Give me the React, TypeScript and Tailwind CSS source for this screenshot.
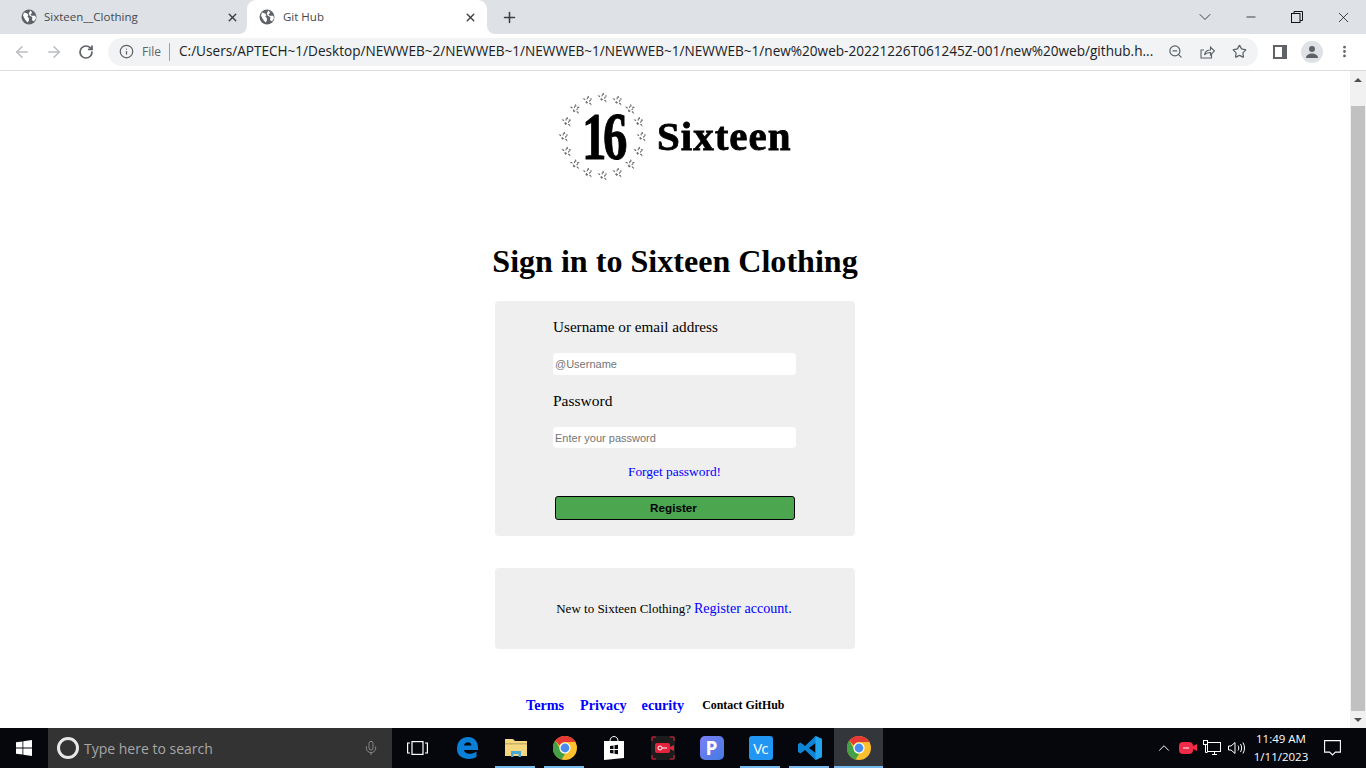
import React from 'react';
import { ArrowLeft, ArrowRight, RotateCw, Info, ChevronDown, ChevronUp, X, Plus, Minus, ZoomOut, Star, MoreVertical, Mic } from 'lucide-react';

const Globe = () => (
  <svg width="16" height="16" viewBox="0 0 16 16">
    <circle cx="8" cy="8" r="7.5" fill="#5f6368" />
    <path d="M3 3.5l3.2 1 1.2 1.6-1 1.4 1.5 1.5v2.6l-1.3 1.8L4 10.5 2 6.5zM10 1.8l1 2.2-1.5 1.4 1 1.4h3.8l.7 2.5-2 3-2-1 .3-3.3-2.6-1.2-.9-2.6 1.3-2.2z" fill="#fff" />
  </svg>
);

const Chrome = () => (
  <svg width="24" height="24" viewBox="0 0 24 24">
    <circle cx="12" cy="12" r="12" fill="#fbc02d" />
    <path d="M12 0a12 12 0 0 1 10.4 6H12a6 6 0 0 0-5.4 3.4L2.3 4.4A12 12 0 0 1 12 0z" fill="#e53935" />
    <path d="M2.3 4.4l4.4 7.9A6 6 0 0 0 12 18l-3.4 5.5A12 12 0 0 1 2.3 4.4z" fill="#43a047" />
    <circle cx="12" cy="12" r="5.6" fill="#fff" />
    <circle cx="12" cy="12" r="4.4" fill="#4a8bf0" />
  </svg>
);

const StarRing = () => {
  const stars = [];
  for (let i = 0; i < 16; i++) {
    const a = (i / 16) * Math.PI * 2;
    stars.push(
      <polygon
        key={i}
        points="0,-4 1,-1 4,-1 1.5,1 2.5,4 0,2 -2.5,4 -1.5,1 -4,-1 -1,-1"
        transform={`translate(${45 + Math.sin(a) * 39} ${45 - Math.cos(a) * 39})`}
        fill="#fff"
        stroke="#666"
        strokeWidth="1.1"
        strokeDasharray="2 2"
      />
    );
  }
  return <svg width="90" height="90" viewBox="0 0 90 90">{stars}</svg>;
};

const TaskIcon = ({ children, active, bar }: { children: React.ReactNode; active?: boolean; bar?: boolean }) => (
  <div className={`relative flex h-10 w-[49px] items-center justify-center ${active ? 'bg-[#33363b]' : ''}`}>
    {children}
    {bar && <div className={`absolute bottom-0 h-[2px] bg-[#76b9ed] ${active ? 'left-0 right-0' : 'left-[4px] right-[5px]'}`} />}
  </div>
);

const BrowserChrome = () => (
  <div className="shrink-0" style={{ fontFamily: '"Open Sans", "Noto Sans", sans-serif' }}>
    <div className="flex h-[34px] items-end justify-between bg-[#dee1e6]">
      <div className="flex items-end">
        <div className="flex h-[34px] w-[247px] items-center pl-[21px] pr-[8px] text-[11.5px] text-[#45494d]">
          <Globe />
          <span className="ml-[7px] flex-1">Sixteen__Clothing</span>
          <X size={13} strokeWidth={2.5} className="text-[#3c4043]" />
        </div>
        <div className="relative flex h-[34px] w-[240px] items-center rounded-t-[9px] bg-white pl-[12px] pr-[10px] text-[11.5px] text-[#45494d]">
          <div className="absolute bottom-0 left-[-8px] h-[8px] w-[8px] bg-white">
            <div className="h-full w-full rounded-br-[8px] bg-[#dee1e6]" />
          </div>
          <Globe />
          <span className="ml-[8px] flex-1">Git Hub</span>
          <X size={13} strokeWidth={2.5} className="text-[#3c4043]" />
          <div className="absolute bottom-0 right-[-8px] h-[8px] w-[8px] bg-white">
            <div className="h-full w-full rounded-bl-[8px] bg-[#dee1e6]" />
          </div>
        </div>
        <div className="flex h-[34px] w-[44px] items-center justify-center">
          <Plus size={17} strokeWidth={2.2} className="text-[#3c4043]" />
        </div>
      </div>
      <div className="flex h-[34px] items-center">
        <div className="flex w-[46px] justify-center"><ChevronDown size={20} strokeWidth={1} className="text-[#222]" /></div>
        <div className="flex w-[46px] justify-center"><Minus size={14} strokeWidth={1.2} className="text-black" /></div>
        <div className="flex w-[46px] justify-center">
          <svg width="12" height="12" viewBox="0 0 12 12" fill="none" stroke="#111"><rect x=".5" y="2.5" width="8.5" height="9" /><path d="M3 2.5V.5h8.500v9H9" /></svg>
        </div>
        <div className="flex w-[46px] justify-center"><X size={17} strokeWidth={1} className="text-black" /></div>
      </div>
    </div>
    <div className="flex h-[37px] items-center border-b border-[#dadce0] bg-white pb-[1px]">
      <div className="flex w-[108px] items-center pl-[13px]">
        <ArrowLeft size={18} strokeWidth={2} className="text-[#b9bcc0]" />
        <ArrowRight size={18} strokeWidth={2} className="ml-[14px] text-[#b9bcc0]" />
        <RotateCw size={16} strokeWidth={2.6} className="ml-[15px] text-[#5f6368]" />
      </div>
      <div className="flex h-[28px] w-[1150px] items-center rounded-full bg-[#f1f3f4] pl-[11px] pr-[10px]">
        <Info size={15} strokeWidth={2} className="text-[#5f6368]" />
        <span className="ml-[8px] text-[12px] text-[#5f6368]">File</span>
        <div className="ml-[8px] h-[18px] w-px bg-[#9aa0a6]" />
        <span className="ml-[9px] w-[979px] overflow-hidden whitespace-nowrap text-[13.6px] text-[#202124]">C:/Users/APTECH~1/Desktop/NEWWEB~2/NEWWEB~1/NEWWEB~1/NEWWEB~1/NEWWEB~1/new%20web-20221226T061245Z-001/new%20web/github.h...</span>
        <ZoomOut size={15} strokeWidth={2} className="ml-[10px] text-[#5f6368]" />
        <svg width="16" height="16" viewBox="0 0 16 16" fill="none" stroke="#5f6368" strokeWidth="1.100" className="ml-[16px]">
          <path d="M12.500 10v4H2V6h3" /><path d="M5.500 11c.5-3.500 3-5 6-5V3l4 4-4 4V8.500c-2.500 0-4.500.5-6 2.500z" />
        </svg>
        <Star size={15} strokeWidth={2} className="ml-[17px] text-[#5f6368]" />
      </div>
      <div className="flex flex-1 items-center pl-[15px]">
        <svg width="14" height="14" viewBox="0 0 14 14"><rect width="14" height="14" fill="#5f6368" /><rect x="2" y="2" width="7" height="10" fill="#fff" /></svg>
        <div className="ml-[14px] flex h-[22px] w-[22px] items-center justify-center rounded-full bg-[#dee1e6]">
          <svg width="14" height="14" viewBox="0 0 14 14" fill="#5f6368"><circle cx="7" cy="4" r="3" /><path d="M1 13c0-3 3-4.500 6-4.500s6 1.500 6 4.500z" /></svg>
        </div>
        <MoreVertical size={15} strokeWidth={2.5} className="ml-[14px] text-[#5f6368]" />
      </div>
    </div>
  </div>
);

const Taskbar = () => (
  <div className="flex h-10 shrink-0 items-center bg-[#05070c] text-white" style={{ fontFamily: '"Open Sans", "Noto Sans", sans-serif' }}>
    <div className="flex h-10 w-[48px] items-center justify-center">
      <svg width="16" height="16" viewBox="0 0 16 16" fill="#fff"><path d="M0 2.300l6.500-.9v6.200H0zM7.300 1.300L16 0v7.600H7.300zM0 8.400h6.500v6.200L0 13.700zM7.300 8.400H16V16l-8.700-1.300z" /></svg>
    </div>
    <div className="flex h-10 w-[344px] items-center bg-[#333] pl-[9px] pr-[13px]">
      <div className="h-[22px] w-[22px] rounded-full border-[3px] border-[#e8e8e8]" />
      <span className="ml-[5px] flex-1 text-[14px] text-[#a6a6a6]">Type here to search</span>
      <Mic size={16} strokeWidth={1.200} className="text-[#9a9a9a]" />
    </div>
    <div className="flex h-10 w-[50px] items-center justify-center">
      <svg width="21" height="14" viewBox="0 0 21 14" fill="none" stroke="#fff" strokeWidth="1.200"><rect x="5" y=".6" width="11" height="12.800" /><path d="M3 2H.6v10H3M18 2h2.400v10H18" /></svg>
    </div>
    <TaskIcon>
      <svg width="22" height="24" viewBox="0 0 22 24"><path d="M1 13C1 5 6 1 12 1c6 0 10 4 10 11v2H8c.5 4.500 7.500 5 12.500 1.500v5.500c-7 4-19.500 2-19.500-8zM8 9.500h7.500C15.500 5 8.500 5 8 9.500z" fill="#0a7fd8" /></svg>
    </TaskIcon>
    <TaskIcon bar>
      <svg width="22" height="20" viewBox="0 0 22 20"><path d="M0 1h8l2 2h12v15H0z" fill="#f5d77e" /><rect y="5" width="22" height="1.500" fill="#c9b26a" /><path d="M6 13h10v6h-2.500v-3h-5v3H6z" fill="#4aa8d8" /></svg>
    </TaskIcon>
    <TaskIcon bar><Chrome /></TaskIcon>
    <TaskIcon>
      <svg width="22" height="24" viewBox="0 0 22 24" fill="#fff"><path d="M7 5c0-6 8-6 8 0" fill="none" stroke="#fff" /><path d="M1 5h20v17L1 24z" /><path d="M7 10l3.500-.5v3.500H7zM11.500 9.300l3.500-.5V13h-3.500zM7 14h3.500v3.500L7 17zM11.500 14H15v4.200l-3.500-.5z" fill="#05070c" /></svg>
    </TaskIcon>
    <TaskIcon>
      <svg width="24" height="24" viewBox="0 0 24 24"><rect width="24" height="24" rx="3" fill="#1c1c1c" /><path d="M1 5V1h4M19 1h4v4M23 19v4h-4M5 23H1v-4" fill="none" stroke="#e5233d" /><rect x="4" y="7" width="15" height="10" rx="2" fill="#e5233d" /><path d="M19 11l4-2v6l-4-2z" fill="#e5233d" /><circle cx="9" cy="12" r="2" fill="none" stroke="#fff" /><path d="M11 12h5" stroke="#fff" /></svg>
    </TaskIcon>
    <TaskIcon>
      <div className="flex h-6 w-6 items-center justify-center rounded-[5px] bg-gradient-to-br from-[#7b7ff5] to-[#3f7be0] text-[19px] font-bold leading-none text-white">P</div>
    </TaskIcon>
    <TaskIcon bar>
      <div className="flex h-6 w-6 items-center justify-center rounded-[3px] bg-[#2196f3] text-[15px] leading-none tracking-tighter text-white">Vc</div>
    </TaskIcon>
    <TaskIcon bar>
      <svg width="24" height="24" viewBox="0 0 24 24"><path d="M17.500 0L24 3v18l-6.500 3L7 14l-4.500 3.500L0 16v-8l2.500-1.500L7 10zM17.500 7L11 12l6.500 5z" fill="#0e85d4" /><path d="M17.500 0L24 3v18l-6.500 3z" fill="#22a5f1" /></svg>
    </TaskIcon>
    <TaskIcon active bar><Chrome /></TaskIcon>
    <div className="flex flex-1 items-center justify-end">
      <ChevronUp size={18} strokeWidth={1.300} className="text-white" />
      <svg width="18" height="14" viewBox="0 0 18 14" className="ml-[6px]"><rect y="1" width="14" height="12" rx="4" fill="#ef2b48" /><path d="M14 5l4-2v7l-4-2z" fill="#ef2b48" /><path d="M4 7h6" stroke="#fff" /></svg>
      <svg width="18" height="16" viewBox="0 0 18 16" fill="none" stroke="#fff" className="ml-[6px]"><rect x="4.500" y="2.500" width="13" height="9" /><path d="M9 14.500h5M11.500 11.500v3" /><rect x=".5" y=".5" width="4" height="4" fill="#05070c" /><path d="M2.500 4.500v8h2" /></svg>
      <svg width="17" height="14" viewBox="0 0 17 14" fill="none" stroke="#fff" className="ml-[7px]"><path d="M.5 5v4h2.500l4 3.500v-11L3 5zM10 4.500c1 1.500 1 3.500 0 5M12.500 3c1.500 2.500 1.500 5.500 0 8M15 1.500c2 3.500 2 7.500 0 11" /></svg>
      <div className="w-[72px] text-center text-[11.5px] leading-[18px]">
        <div>11:49 AM</div>
        <div>1/11/2023</div>
      </div>
      <div className="ml-[7px] mr-[25px]">
        <svg width="17" height="16" viewBox="0 0 17 16" fill="none" stroke="#fff" strokeWidth="1.100"><path d="M.6.6h15.800v11.500h-5L8.500 15l-2.900-2.900h-5z" /></svg>
      </div>
    </div>
  </div>
);

const App = () => {
  return (
    <div className="flex h-screen w-full flex-col overflow-hidden bg-white" style={{ fontFamily: '"Liberation Serif", serif' }}>
      <BrowserChrome />
      <div className="flex min-h-0 flex-1">
        <div className="flex min-w-0 flex-1 flex-col items-center overflow-hidden text-black">
          <div className="mt-[19px] flex h-[92px] w-[238px] items-center pl-[2px] blur-[0.3px]">
            <div className="relative h-[90px] w-[90px] shrink-0">
              <StarRing />
              <span className="absolute inset-0 flex scale-x-[0.72] items-center justify-center text-[68px] font-bold leading-none tracking-[-5px] [-webkit-text-stroke:1px_black]">16</span>
            </div>
            <span className="ml-[9px] whitespace-nowrap text-[41px] font-bold leading-none tracking-[1px] [-webkit-text-stroke:0.8px_black]">Sixteen</span>
          </div>
          <h1 className="mt-[61px] text-[32.1px] font-bold leading-[37px]">Sign in to Sixteen Clothing</h1>

          <form className="mt-[21px] flex w-[360px] flex-col rounded-[4px] bg-[#efefef] pb-[16px] pl-[58px] pt-[17px]">
            <div className="flex w-[243px] flex-col">
              <label className="whitespace-nowrap text-[15.2px] leading-[18px]">Username or email address</label>
              <input placeholder="@Username" className="mt-[17px] h-[22px] rounded-[4px] bg-white pl-[2px] text-[11px] outline-none placeholder:text-[#757575]" style={{ fontFamily: '"Liberation Sans", sans-serif' }} />
              <label className="mt-[17px] text-[15.5px] leading-[18px]">Password</label>
              <input placeholder="Enter your password" className="mt-[17px] h-[21px] rounded-[4px] bg-white pl-[2px] text-[11px] outline-none placeholder:text-[#757575]" style={{ fontFamily: '"Liberation Sans", sans-serif' }} />
              <a className="mt-[16px] text-center text-[13.4px] leading-[15px] text-[#0000ff]">Forget password!</a>
              <button type="button" className="mt-[17px] h-[24px] w-[240px] self-center rounded-[3px] border border-black bg-[#4ca64f] pr-[2px] text-[11.7px] font-bold text-black" style={{ fontFamily: '"Liberation Sans", sans-serif' }}>Register</button>
            </div>
          </form>

          <div className="mt-[32px] flex h-[81px] w-[360px] items-center justify-center rounded-[4px] bg-[#efefef] pr-[2px] text-[13px]">
            <span>New to Sixteen Clothing?</span>
            <a className="ml-[3px] text-[14.1px] text-[#0000ff]">Register account.</a>
          </div>

          <div className="mt-[46px] flex w-[360px] items-center pl-[31px] font-bold leading-[20px]">
            <a className="text-[14.2px] text-[#0000ff]">Terms</a>
            <a className="ml-[16px] text-[14.2px] text-[#0000ff]">Privacy</a>
            <a className="ml-[15px] text-[14.2px] text-[#0000ff]">ecurity</a>
            <span className="ml-[18px] text-[11.9px]">Contact GitHub</span>
          </div>
        </div>
        <div className="flex w-[16px] shrink-0 flex-col items-center bg-[#f1f1f1]">
          <div className="flex h-[17px] items-center">
            <div className="h-0 w-0 border-x-[4px] border-b-[4px] border-x-transparent border-b-[#505050]" />
          </div>
          <div className="mt-[18px] w-[14px] flex-1 bg-[#c1c1c1]" />
          <div className="flex h-[17px] items-center">
            <div className="h-0 w-0 border-x-[4px] border-t-[4px] border-x-transparent border-t-[#505050]" />
          </div>
        </div>
      </div>
      <Taskbar />
    </div>
  );
};

export default App;
